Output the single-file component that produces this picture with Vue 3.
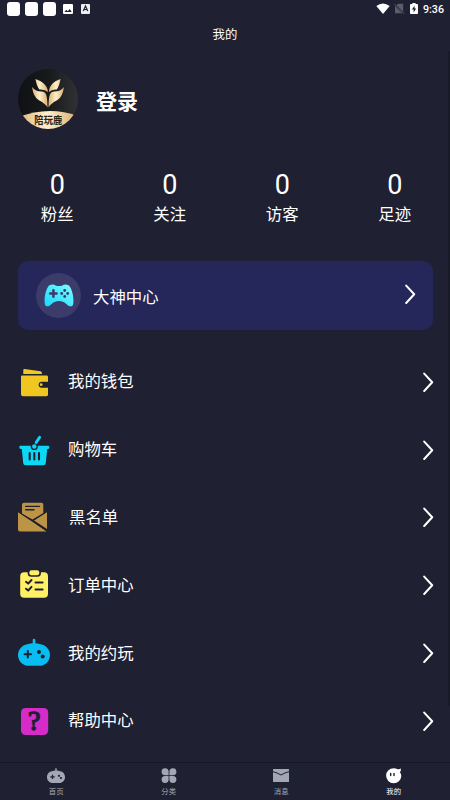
<script setup>
const stats = [
  { label: '粉丝', value: 0 },
  { label: '关注', value: 0 },
  { label: '访客', value: 0 },
  { label: '足迹', value: 0 },
]
const menu = [
  { id: 'wallet', label: '我的钱包' },
  { id: 'cart', label: '购物车' },
  { id: 'blacklist', label: '黑名单' },
  { id: 'orders', label: '订单中心' },
  { id: 'play', label: '我的约玩' },
  { id: 'help', label: '帮助中心' },
]
const tabs = [
  { id: 'home', label: '首页' },
  { id: 'category', label: '分类' },
  { id: 'message', label: '消息' },
  { id: 'mine', label: '我的', active: true },
]
</script>

<template>
  <div class="screen">
    <header class="status">
      <div class="status-left">
        <i class="blank"></i><i class="blank"></i><i class="blank"></i>
        <svg class="pic" width="10" height="10" viewBox="0 0 10 10">
          <rect width="10" height="10" rx="1" fill="#fff" />
          <path d="M1.4 8 3.4 5.8 4.8 7.2 6.8 5 8.7 8Z" fill="#1f2031" />
        </svg>
        <svg class="lang" width="9" height="10" viewBox="0 0 9 10">
          <rect width="9" height="10" rx="1" fill="#eeeef2" />
          <path d="M2.3 7 4.5 2 6.7 7M3 5.5H6" fill="none" stroke="#1f2031" stroke-width="1.2" />
        </svg>
      </div>
      <div class="status-right">
        <svg width="14" height="11" viewBox="0 0 14 11"><path d="M.3 3Q7-2.2 13.7 3L7 11Z" fill="#fff" /></svg>
        <svg class="sim" width="11" height="11" viewBox="0 0 11 11">
          <path d="M4 .8H9.2V8.8L2.6 2.2ZM1 3 8.4 10.2H1Z" fill="#5c5d6b" />
          <path d="M.3 1 10.3 10.8" stroke="#5c5d6b" stroke-width=".9" />
        </svg>
        <svg class="battery" width="8" height="11" viewBox="0 0 8 11">
          <path d="M2.4 0H5.6V1.1H7.2Q8 1.1 8 2V10.2Q8 11 7.2 11H.8Q0 11 0 10.2V2Q0 1.1.8 1.1H2.4Z" fill="#fff" />
          <path d="M4.6 2.8 1.9 6.5H3.6V9.4L6.2 5.5H4.6Z" fill="#1f2031" />
        </svg>
        <span class="time">9:36</span>
      </div>
    </header>
    <h1 class="title">我的</h1>

    <section class="profile">
      <svg class="avatar" width="60" height="60" viewBox="0 0 60 60">
        <defs>
          <linearGradient id="dark" x1="0" y1="0" x2="1" y2="0">
            <stop offset="0" stop-color="#101114" /><stop offset=".5" stop-color="#17191b" /><stop offset="1" stop-color="#303133" />
          </linearGradient>
          <linearGradient id="gold" x1="0" y1="0" x2="1" y2="0">
            <stop offset="0" stop-color="#dcb273" /><stop offset=".48" stop-color="#fff0cd" /><stop offset="1" stop-color="#d8aa6b" />
          </linearGradient>
          <clipPath id="round"><circle cx="30" cy="30" r="30" /></clipPath>
        </defs>
        <g clip-path="url(#round)">
          <rect width="60" height="60" fill="url(#dark)" />
          <path d="M0 48.5Q30 36.5 60 47V60H0Z" fill="url(#gold)" />
          <path d="M17.5 10C24 12.5 29.5 16 30 23Q26.5 20 21.5 20.5Q18.5 17 17.5 10ZM14 18Q17.5 22.5 23.5 22.5C28 22.5 29.5 26 29.5 38.5Q27.5 34.5 20.5 31Q15.5 28 14 18Z" fill="url(#gold)" />
          <path d="M42.5 10C36 12.5 31.3 16 31 23Q34 20 38.7 20.5Q41.5 17 42.5 10ZM46 18Q42.5 22.5 36.5 22.5C32 22.5 30.6 26 30.6 38.5Q32.5 34.5 39.5 31Q44.5 28 46 18Z" fill="url(#gold)" />
          <text transform="translate(30.3 55.2) scale(1 1.15)" text-anchor="middle" class="logo-text">陪玩鹿</text>
        </g>
      </svg>
      <span class="login">登录</span>
    </section>

    <section class="stats">
      <div v-for="s in stats" :key="s.label" class="stat">
        <span class="num">{{ s.value }}</span>
        <span class="stat-label">{{ s.label }}</span>
      </div>
    </section>

    <section class="card">
      <div class="disc">
        <svg width="30" height="23" viewBox="0 0 30 23">
          <defs>
            <linearGradient id="pad" x1="0" y1="1" x2="1" y2="0">
              <stop offset="0" stop-color="#16d8ff" /><stop offset="1" stop-color="#80fbff" />
            </linearGradient>
          </defs>
          <path d="M5 1.600Q9-.4 12 1.700Q15 2.500 18 1.700Q21-.4 25 1.600C28 5 30 13 29.300 19.500Q28.800 23 25.500 22.200C22.500 21 21 17 15 17S7.500 21 4.500 22.200Q1.200 23 .7 19.500C0 13 2 5 5 1.600Z" fill="url(#pad)" />
          <path d="M9.400 6.300V12.700M6.200 9.500H12.600" stroke="#3b3c69" stroke-width="2.500" stroke-linecap="round" />
          <g fill="#3b3c69"><circle cx="20.700" cy="6.500" r="1.400" /><circle cx="20.700" cy="12.500" r="1.400" /><circle cx="17.700" cy="9.500" r="1.400" /><circle cx="23.700" cy="9.500" r="1.400" /></g>
        </svg>
      </div>
      <span class="label">大神中心</span>
      <svg class="chevron" width="12" height="20" viewBox="0 0 12 20"><path d="M2.200 1.600 10.200 10.300 2.200 19" /></svg>
    </section>

    <nav class="menu">
      <div v-for="m in menu" :key="m.id" class="row" :class="m.id">
        <svg class="icon" width="34" height="34" viewBox="0 0 34 34">
          <g v-if="m.id === 'wallet'" fill="#f0c720">
            <path d="M5.300 9V5Q5.300 3.800 6.500 4L22.600 6.200Q24 6.500 24 9Z" />
            <path d="M4.300 10.600H28.500Q30 10.600 30 12V16.800H23A3 3 0 0 0 23 22.700H30V29.800Q30 31.200 28.500 31.200H5Q3 31.200 3 29.200V11.800Q3 10.600 4.300 10.600Z" />
            <circle cx="23.200" cy="19.700" r="1.400" />
          </g>
          <g v-else-if="m.id === 'cart'">
            <path d="M2.500 12.800H30.200Q31.400 12.800 31.400 14.300T30.200 16H29.200L27.800 30Q27.500 32.300 25.300 32.300H7.700Q5.500 32.300 5.200 30L3.800 16H2.700Q1.300 16 1.300 14.300T2.500 12.800Z" fill="#0bd8f7" />
            <circle cx="16.300" cy="13.400" r="3.600" fill="#1f2031" />
            <circle cx="16.300" cy="13.500" r="2.200" fill="#0bd8f7" />
            <path d="M18.200 9.600 21.600 4.200" stroke="#0bd8f7" stroke-width="2.900" stroke-linecap="round" />
            <path d="M11.700 20V26.500M16.300 20V26.500M21 20V26.500" stroke="#1f2031" stroke-width="2.100" stroke-linecap="round" />
          </g>
          <g v-else-if="m.id === 'blacklist'">
            <path d="M4 14V4.700Q4 2.700 6 2.700H23.300Q25.300 2.700 25.300 4.700V13.300L14.500 19.500Z" fill="#bd9445" />
            <path d="M0 11.700 28.500 31.400H2Q0 31.400 0 29.400ZM29 11.700V29L16 20.400Z" fill="#bd9445" />
            <path d="M0 11.500 29 30.300M29 11.500 14.700 20.600" stroke="#1f2031" stroke-width="1.100" />
            <path d="M7.700 6.400H21.500M7.700 9.700H16" stroke="#1f2031" stroke-width="1.400" stroke-linecap="round" />
          </g>
          <g v-else-if="m.id === 'orders'">
            <rect x="2.200" y="4.300" width="27.800" height="25.500" rx="4" fill="#fff065" />
            <rect x="9.700" y=".7" width="13.200" height="8.100" rx="3.500" fill="#1f2031" />
            <rect x="11.400" y="2.300" width="9.800" height="5" rx="2" fill="#fff065" />
            <path d="M8 13.800 10.200 15.600 13.500 12M8 20.700 10.200 22.500 13.500 18.900M17.500 14.600H24.600M17.500 21.400H24.600" fill="none" stroke="#1f2031" stroke-width="2" stroke-linecap="round" stroke-linejoin="round" />
          </g>
          <g v-else-if="m.id === 'play'">
            <rect y="8.300" width="32" height="21.500" rx="10.700" fill="#08bdf2" />
            <path d="M7.500 9.300Q11 7.300 14.700 7.300V4Q14.700 2.800 16 2.800T17.300 4V7.300Q21 7.300 24.500 9.300Z" fill="#08bdf2" />
            <path d="M9.800 15V21.400M6.600 18.200H13" stroke="#1f2031" stroke-width="2" stroke-linecap="round" />
            <circle cx="21" cy="16.100" r="2" fill="#1f2031" /><circle cx="24.700" cy="20.500" r="2" fill="#1f2031" />
          </g>
          <g v-else>
            <rect x="3" y="4" width="27.200" height="27" rx="4.500" fill="#d42bc9" />
            <text x="16.200" y="26.300" text-anchor="middle" class="question">?</text>
          </g>
        </svg>
        <span class="label">{{ m.label }}</span>
        <svg class="chevron" width="12" height="20" viewBox="0 0 12 20"><path d="M2.200 1.600 10.200 10.300 2.200 19" /></svg>
      </div>
    </nav>

    <footer class="tabs">
      <div v-for="t in tabs" :key="t.id" class="tab" :class="{ active: t.active }">
        <svg width="18" height="16" viewBox="0 0 18 16">
          <g v-if="t.id === 'home'">
            <path d="M5 3.300Q6.500 2.600 8.300 2.600V.3H9.700V2.600Q11.500 2.600 13 3.300C16 3.600 18 6 18 9.200S15.500 15 12.300 15H5.700C2.500 15 0 12.400 0 9.200S2 3.600 5 3.300Z" fill="#a1a8b4" />
            <path d="M5.500 6.700V11M3.300 8.900H7.700" stroke="#1f2031" stroke-width="1.200" />
            <circle cx="12" cy="7.800" r="1.100" fill="#1f2031" /><circle cx="13.900" cy="10" r="1.100" fill="#1f2031" />
          </g>
          <g v-else-if="t.id === 'category'" fill="#a1a8b4">
            <path d="M8.600 7.200H5A3.500 3.500 0 1 1 8.600 3.700ZM9.400 7.200H13A3.500 3.500 0 1 0 9.400 3.700ZM8.600 8H5A3.500 3.500 0 1 0 8.600 11.500ZM9.400 8H13A3.500 3.500 0 1 1 9.400 11.500Z" />
          </g>
          <g v-else-if="t.id === 'message'">
            <rect x="1" y="1" width="16" height="13" rx=".5" fill="#a1a8b4" />
            <path d="M1 3.700Q5 4.600 9 7Q13 4.600 17 3.700" fill="none" stroke="#1f2031" stroke-width="1" />
          </g>
          <g v-else>
            <path d="M8.700.2Q11 .2 12.500 1.200Q14.500 1.500 16 .6Q16 3 14.900 4.300Q16.300 6 16.300 8A7.600 7.500 0 1 1 8.700.2Z" fill="#fff" />
            <path d="M5.700 5.500V7.500M9 5.500V7.500" stroke="#1f2031" stroke-width="1.400" stroke-linecap="round" />
          </g>
        </svg>
        <span>{{ t.label }}</span>
      </div>
    </footer>
    <div class="scrollbar"></div>
  </div>
</template>

<style>
body { margin: 0; background: #1f2031; }
</style>

<style scoped>
.screen {
  position: relative;
  width: 450px;
  height: 800px;
  overflow: hidden;
  display: flex;
  flex-direction: column;
  background: #1f2031;
  color: #fff;
  font-family: "Noto Sans CJK SC", sans-serif;
}
svg { display: block; flex: none; }
.status { height: 18px; display: flex; justify-content: space-between; padding: 0 6px 0 7px; }
.status-left { display: flex; gap: 5px; padding-top: 2px; }
.blank { width: 13px; height: 13.500px; border-radius: 3px; background: #fff; }
.pic { margin: 2px 0 0 1.500px; }
.lang { margin: 2px 0 0 3.500px; }
.status-right { display: flex; padding-top: 3px; }
.sim { margin-left: 4px; }
.battery { margin-left: 5px; }
.time { margin-left: 5px; font: 500 10.700px/13px Roboto, sans-serif; }
.title { margin: 0; height: 32px; font-size: 12.400px; line-height: 32px; font-weight: 400; text-align: center; }
.profile { display: flex; align-items: center; height: 60px; margin-top: 19px; padding-left: 18px; }
.login { margin-left: 18px; font-size: 21px; line-height: 30px; font-weight: 700; padding-top: 2px; }
.logo-text { font-size: 9.300px; font-weight: 700; fill: #29231b; }
.question { font: 400 28px "Liberation Serif", serif; fill: #1f2031; stroke: #1f2031; stroke-width: 1.400px; }
.stats { display: grid; grid-template-columns: repeat(4, 1fr); margin-top: 41px; height: 91px; padding-left: 1px; margin-right: -1px; }
.stat { display: flex; flex-direction: column; align-items: center; }
.num { font: 400 27px/31px Roboto, sans-serif; }
.stat-label { font-size: 16.400px; line-height: 24px; }
.card { display: flex; align-items: center; box-sizing: border-box; width: 415px; height: 69px; margin-left: 18px; padding: 0 17px 0 18px; border-radius: 10px; background: #25265a; }
.disc { display: flex; align-items: center; justify-content: center; width: 45px; height: 45px; border-radius: 50%; background: #3b3c69; }
.label { font-size: 16.400px; line-height: 24px; }
.card .label { margin-left: 12px; }
.chevron { margin-left: auto; }
.card .chevron { margin-top: -4px; }
.chevron path { fill: none; stroke: #fff; stroke-width: 2; stroke-linecap: round; stroke-linejoin: round; }
.menu { display: grid; grid-template-rows: repeat(6, 67.800px); margin-top: 18px; padding: 0 16px 0 18px; }
.row { display: flex; align-items: center; }
.row .label { margin-left: 16px; padding-bottom: 3px; }
.blacklist .label { margin-left: 17px; }
.tabs { display: grid; grid-template-columns: repeat(4, 1fr); box-sizing: border-box; height: 38px; margin-top: auto; border-top: 1px solid #171725; }
.tab { display: flex; flex-direction: column; align-items: center; padding-top: 5px; font-size: 7.400px; line-height: 11px; color: #a1a8b4; gap: 1px; }
.active { color: #fff; }
.scrollbar { position: absolute; right: 0; top: 51px; width: 2px; height: 655px; background: #191a28; }
</style>
